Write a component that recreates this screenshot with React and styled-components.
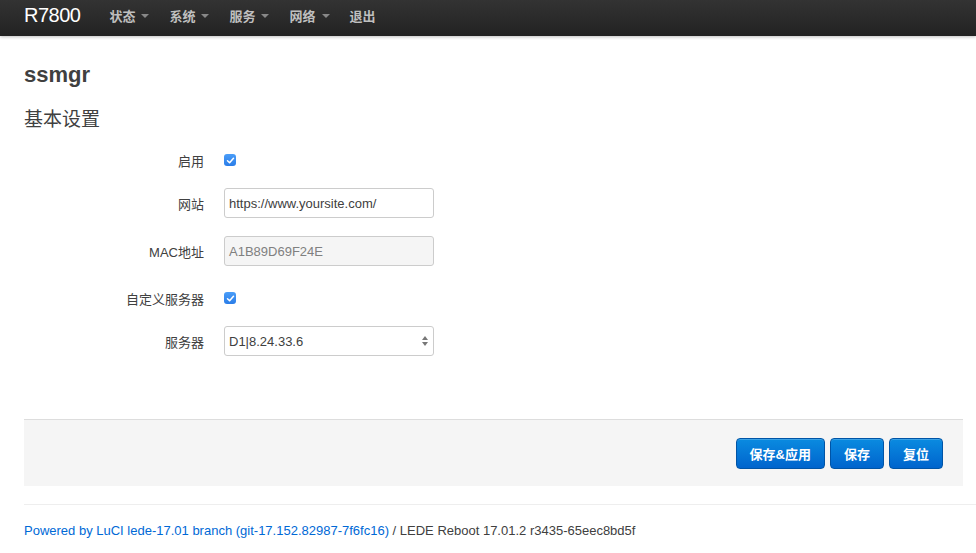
import React from 'react';
import styled, { createGlobalStyle } from 'styled-components';

const Global = createGlobalStyle`
  html, body {
    margin: 0;
    padding: 0;
    background: #fff;
    font-family: "Liberation Sans", "Noto Sans CJK SC", sans-serif;
    font-size: 13px;
    color: #404040;
  }
`;

const Navbar = styled.div`
  box-sizing: border-box;
  height: 36px;
  background: linear-gradient(to bottom, #333 0%, #222 100%);
  box-shadow: 0 1px 3px rgba(0, 0, 0, 0.25);
  display: flex;
  align-items: center;
  padding: 0 0 5px 24px;
`;

const Brand = styled.a`
  color: #fff;
  font-size: 20px;
  letter-spacing: -0.5px;
  margin-right: 19px;
  text-decoration: none;
`;

const NavItem = styled.a`
  color: #bfbfbf;
  font-size: 13px;
  font-weight: bold;
  padding: 0 10px;
  display: flex;
  align-items: center;
  gap: 4px;
  text-decoration: none;
`;

const Caret = styled.span`
  width: 0;
  height: 0;
  border-left: 4px solid transparent;
  border-right: 4px solid transparent;
  border-top: 4px solid #888;
  margin-left: 2px;
`;

const Main = styled.div`
  padding: 0 12px 0 24px;
`;

const Title = styled.h2`
  margin: 26px 0 0;
  font-size: 22px;
  font-weight: bold;
  color: #404040;
  line-height: 26px;
`;

const Section = styled.h3`
  margin: 20px 0 0;
  font-size: 19px;
  font-weight: normal;
  color: #404040;
  line-height: 24px;
`;

const Form = styled.div`
  margin-top: 11px;
  display: flex;
  flex-direction: column;
`;

const Row = styled.div`
  display: grid;
  grid-template-columns: 180px 210px;
  column-gap: 20px;
  align-items: center;
  height: ${p => p.h}px;
`;

const Label = styled.label`
  text-align: right;
  font-size: 13px;
  color: #404040;
`;

const Check = styled.span`
  width: 12px;
  height: 12px;
  border-radius: 3px;
  background: linear-gradient(to bottom, #4a9df8, #2a7de8);
  display: flex;
  align-items: center;
  justify-content: center;
`;

const Input = styled.div`
  box-sizing: border-box;
  height: 30px;
  border: 1px solid #ccc;
  border-radius: 3px;
  background: ${p => (p.disabled ? '#f5f5f5' : '#fff')};
  color: ${p => (p.disabled ? '#808080' : '#404040')};
  font-size: 13px;
  padding: 0 4px;
  display: flex;
  align-items: center;
  justify-content: space-between;
`;

const Arrows = styled.span`
  display: flex;
  flex-direction: column;
  gap: 2px;
  margin-right: 1px;
`;

const Tri = styled.span`
  width: 0;
  height: 0;
  border-left: 3px solid transparent;
  border-right: 3px solid transparent;
  ${p => (p.up ? 'border-bottom: 4px solid #777;' : 'border-top: 4px solid #777;')}
`;

const Actions = styled.div`
  margin-top: 60px;
  margin-right: 1px;
  background: #f5f5f5;
  border-top: 1px solid #ddd;
  height: 66px;
  display: flex;
  justify-content: flex-end;
  align-items: center;
  gap: 5px;
  padding-right: 20px;
`;

const Button = styled.button`
  height: 31px;
  padding: 0 ${p => p.pad}px;
  border: 1px solid #0054a6;
  border-radius: 4px;
  background: linear-gradient(to bottom, #0a8be0 0%, #0064cd 100%);
  color: #fff;
  font-family: inherit;
  font-size: 13px;
  font-weight: bold;
  box-shadow: inset 0 1px 0 rgba(255, 255, 255, 0.2);
`;

const Footer = styled.div`
  margin-top: 18px;
  margin-right: -12px;
  border-top: 1px solid #eee;
  padding-top: 18px;
  font-size: 13px;
  color: #404040;
  a {
    color: #0069d6;
    text-decoration: none;
  }
`;

function Tick() {
  return (
    <svg width="9" height="9" viewBox="0 0 9 9">
      <path d="M1.5 4.8 L3.6 6.8 L7.5 2.2" fill="none" stroke="#fff" strokeWidth="1.5" strokeLinecap="round" strokeLinejoin="round" />
    </svg>
  );
}

const menus = ['状态', '系统', '服务', '网络'];

export default function App() {
  return (
    <>
      <Global />
      <Navbar>
        <Brand>R7800</Brand>
        {menus.map(m => (
          <NavItem key={m}>{m}<Caret /></NavItem>
        ))}
        <NavItem>退出</NavItem>
      </Navbar>
      <Main>
        <Title>ssmgr</Title>
        <Section>基本设置</Section>
        <Form>
          <Row h={34}>
            <Label>启用</Label>
            <Check><Tick /></Check>
          </Row>
          <Row h={52}>
            <Label>网站</Label>
            <Input>https://www.yoursite.com/</Input>
          </Row>
          <Row h={44}>
            <Label>MAC地址</Label>
            <Input disabled>A1B89D69F24E</Input>
          </Row>
          <Row h={50}>
            <Label>自定义服务器</Label>
            <Check><Tick /></Check>
          </Row>
          <Row h={36}>
            <Label>服务器</Label>
            <Input>D1|8.24.33.6<Arrows><Tri up /><Tri /></Arrows></Input>
          </Row>
        </Form>
        <Actions>
          <Button pad={13}>保存&amp;应用</Button>
          <Button pad={13}>保存</Button>
          <Button pad={13}>复位</Button>
        </Actions>
        <Footer>
          <a>Powered by LuCI lede-17.01 branch (git-17.152.82987-7f6fc16)</a> / LEDE Reboot 17.01.2 r3435-65eec8bd5f
        </Footer>
      </Main>
    </>
  );
}
